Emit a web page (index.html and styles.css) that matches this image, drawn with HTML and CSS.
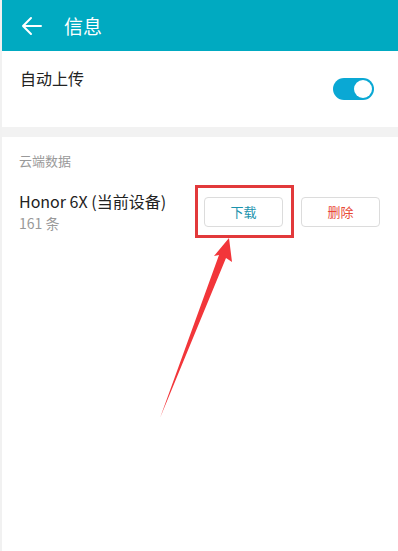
FILE: index.html
```html
<!DOCTYPE html>
<html lang="zh-CN">
<head>
    <meta charset="UTF-8">
    <meta name="viewport" content="width=device-width, initial-scale=1.0">
    <title>信息</title>
    <link rel="stylesheet" href="styles.css">
</head>
<body>
    <div class="screen">
        <!-- 标题栏 -->
        <header class="topbar">
            <svg class="back" width="22" height="20" viewBox="0 0 22 20">
                <path d="M20 10 H2 M10 2 L2 10 L10 18" fill="none" stroke="#fff" stroke-width="2" stroke-linecap="round" stroke-linejoin="round"/>
            </svg>
            <span class="title">信息</span>
        </header>

        <div class="row-upload">
            <span class="label">自动上传</span>
            <span class="switch"><span class="knob"></span></span>
        </div>

        <div class="divider"></div>

        <div class="section-title">云端数据</div>

        <div class="device">
            <div class="device-info">
                <div class="device-name">Honor 6X (当前设备)</div>
                <div class="device-count">161 条</div>
            </div>
            <button class="btn btn-download">下载</button>
            <button class="btn btn-delete">删除</button>
        </div>

        <!-- 标注 -->
        <svg class="markup" width="398" height="551" viewBox="0 0 398 551">
            <rect x="196.5" y="186.5" width="96" height="50" fill="none" stroke="#e2393b" stroke-width="3"/>
            <polygon points="229,238 232,262 226,258 160,418 219,255 214,256" fill="#f2363a"/>
        </svg>
    </div>
</body>
</html>
```

FILE: styles.css
```css
body {
    margin: 0;
    padding: 0;
    background: #fff;
    font-family: "Noto Sans CJK SC", "Noto Sans", sans-serif;
    color: #222;
}
.screen {
    position: relative;
    width: 398px;
    height: 551px;
    overflow: hidden;
    border-left: 2px solid #f1f1f1;
    box-sizing: border-box;
}
.topbar {
    height: 51px;
    background: #00aac1;
    display: flex;
    align-items: center;
    margin-left: -2px;
}
.back {
    margin-left: 21px;
}
.title {
    margin-left: 21px;
    font-size: 19px;
    color: #fff;
}
.row-upload {
    height: 76px;
    display: flex;
    justify-content: space-between;
    align-items: flex-start;
    padding: 16px 24px 0 18px;
    box-sizing: border-box;
}
.label {
    font-size: 16px;
    line-height: 22px;
}
.switch {
    position: relative;
    width: 41px;
    height: 22px;
    margin-top: 11px;
    border-radius: 11px;
    background: #0aa8d4;
}
.knob {
    position: absolute;
    top: 2px;
    right: 2px;
    width: 18px;
    height: 18px;
    border-radius: 50%;
    background: #fff;
}
.divider {
    height: 10px;
    background: #f2f2f2;
    margin-left: -2px;
}
.section-title {
    margin-top: 15px;
    padding-left: 17px;
    font-size: 13px;
    line-height: 18px;
    color: #999;
}
.device {
    display: flex;
    align-items: center;
    padding: 20px 18px 0 17px;
}
.device-info {
    flex: 1;
}
.device-name {
    font-size: 16px;
    line-height: 22px;
    color: #222;
}
.device-count {
    margin-top: 1px;
    font-size: 14px;
    line-height: 20px;
    color: #999;
}
.btn {
    width: 79px;
    height: 30px;
    border: 1px solid #dcdcdc;
    border-radius: 4px;
    background: #fff;
    font-family: inherit;
    font-size: 13px;
    padding: 0;
}
.btn-download {
    color: #1a93ad;
    margin-right: 18px;
}
.btn-delete {
    color: #e84a36;
}
.markup {
    position: absolute;
    top: 0;
    left: -2px;
    pointer-events: none;
}
```
